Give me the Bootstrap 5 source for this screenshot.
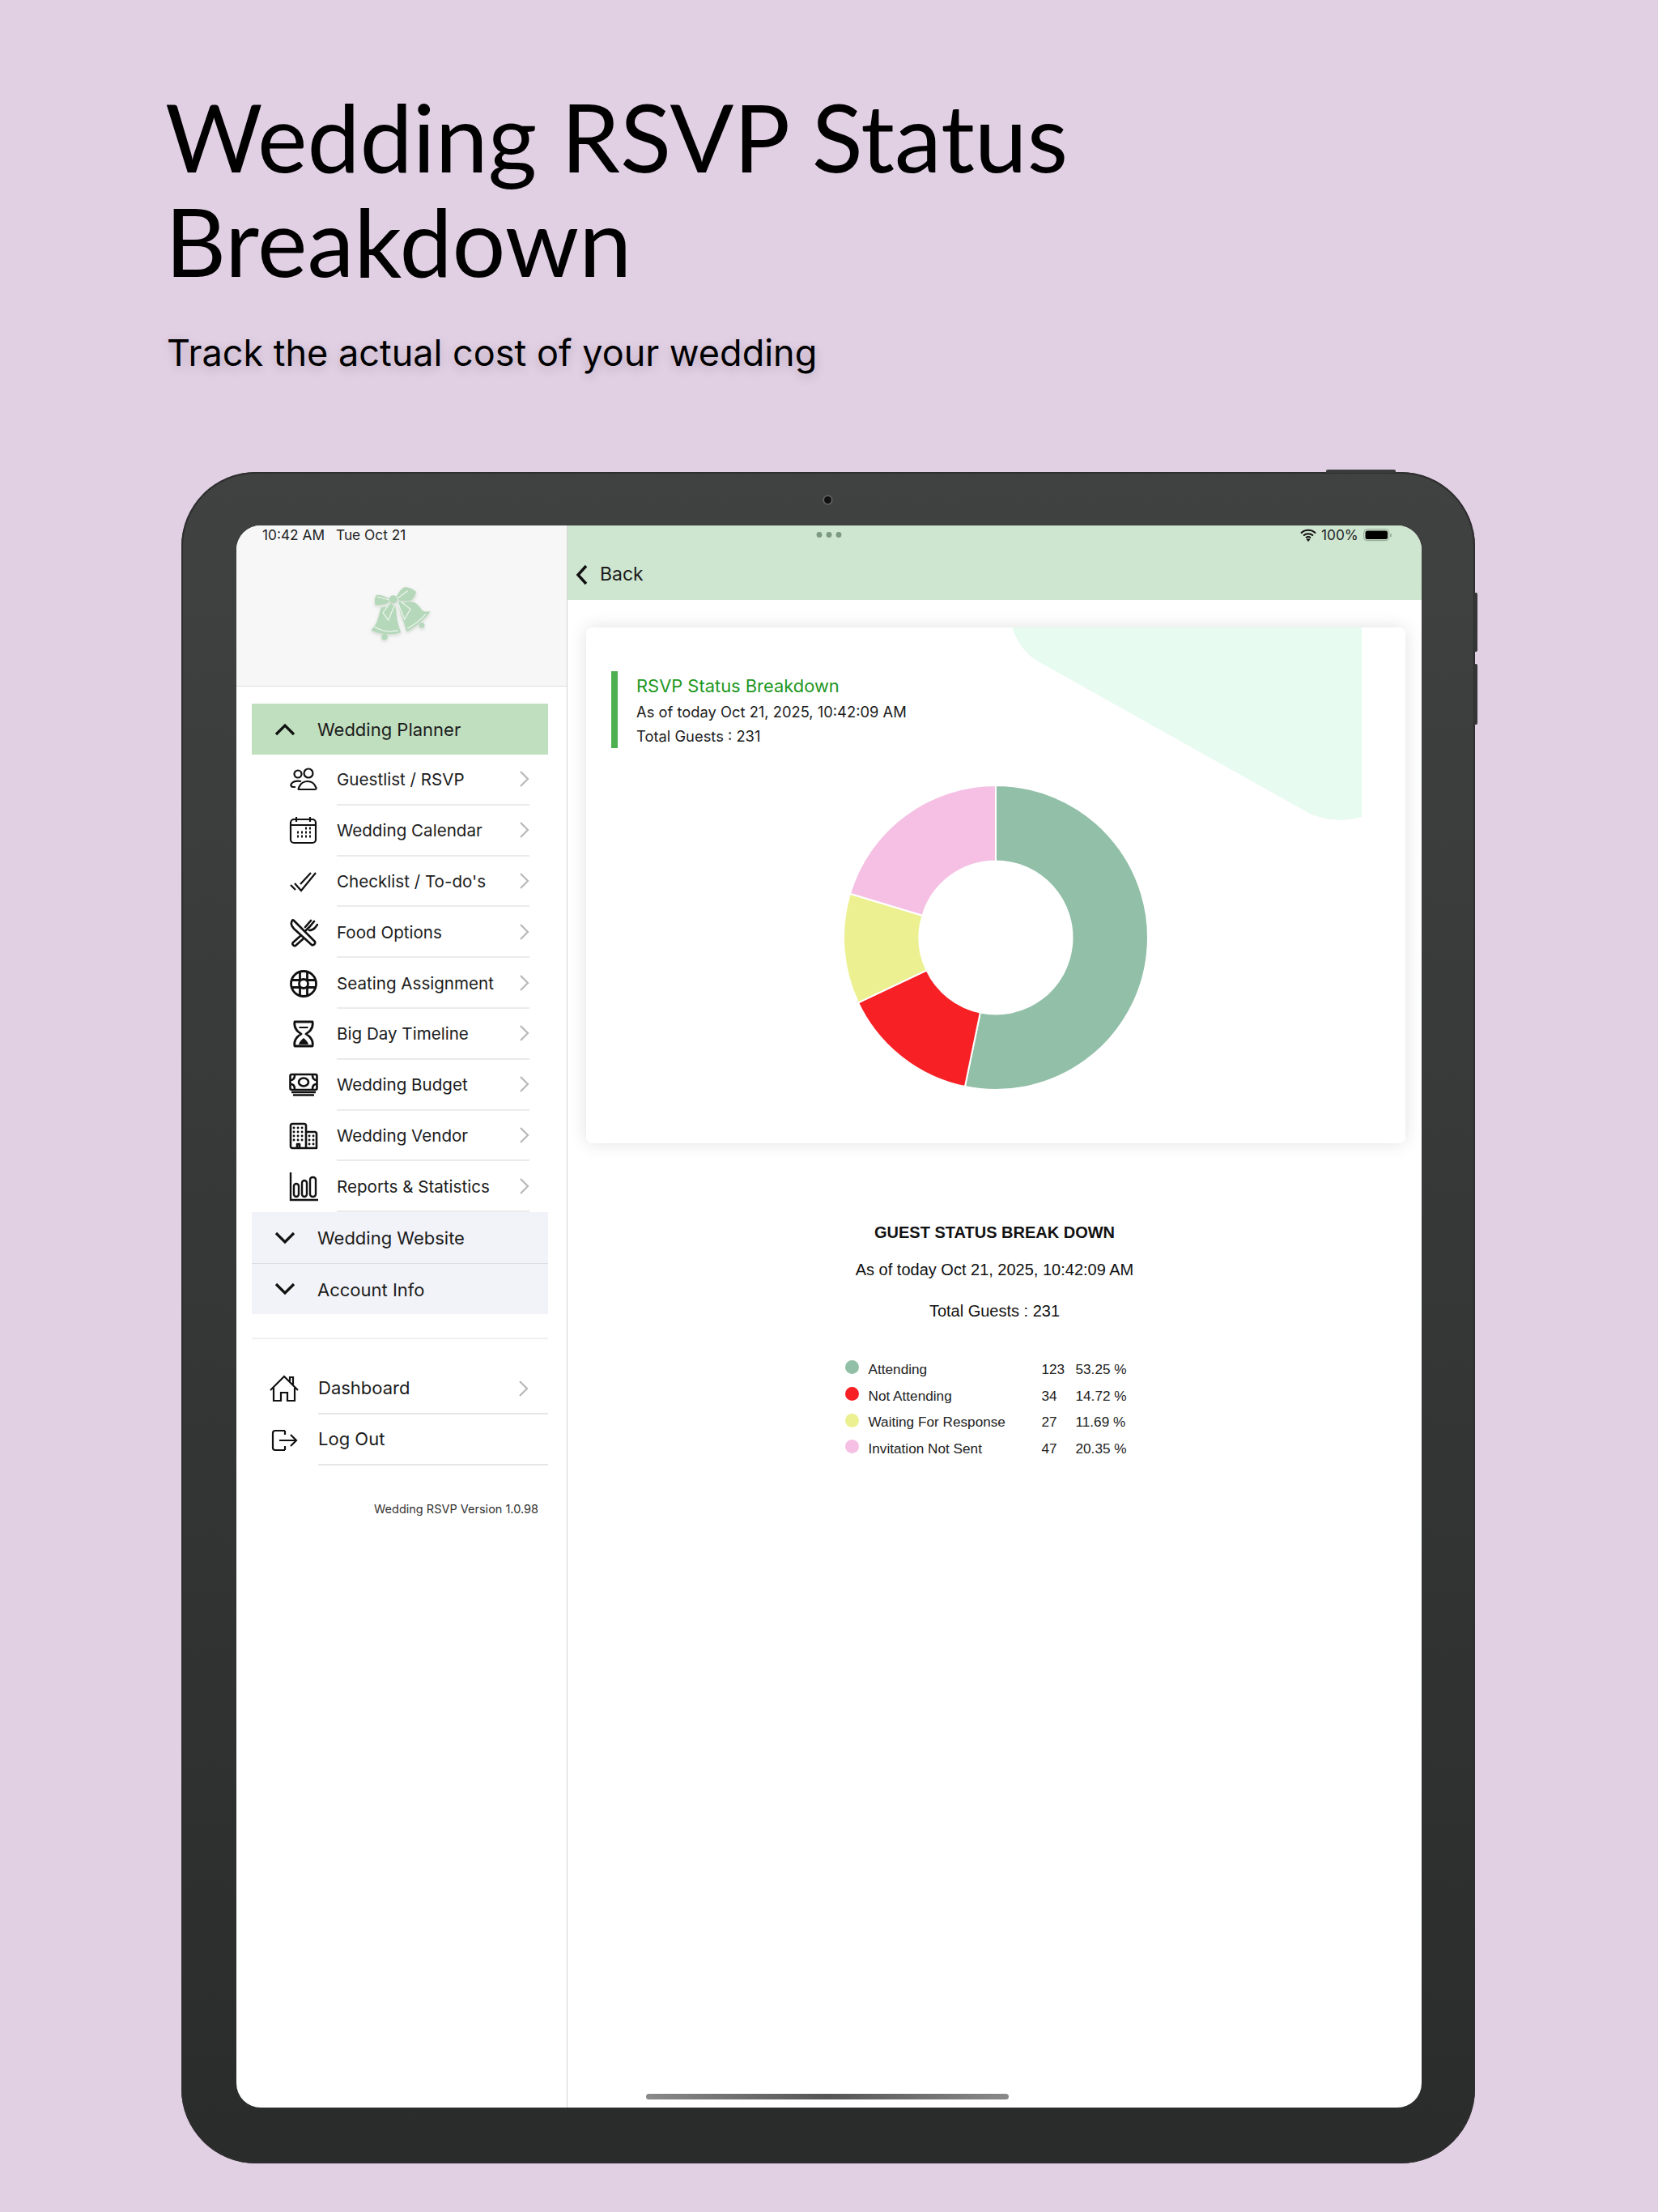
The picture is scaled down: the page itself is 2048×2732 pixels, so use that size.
<!DOCTYPE html>
<html lang="en">
  <head>
    <meta charset="UTF-8" />
    <meta name="viewport" content="width=device-width, initial-scale=1.0" />
    <link href="https://cdn.jsdelivr.net/npm/bootstrap@5.3.0/dist/css/bootstrap.min.css" rel="stylesheet" />
    <title>Wedding RSVP Status Breakdown</title>
    <style>
      body {
        background: #e1cfe4;
        height: 2732px;
        overflow: hidden;
        font-family: Inter, "Liberation Sans", sans-serif;
        color: #1c1c1c;
      }
      .promo-head {
        padding: 104px 0 0 204px;
        height: 583px;
      }
      .promo-title {
        font-family: Lato, sans-serif;
        font-weight: 400;
        font-size: 116.4px;
        line-height: 129px;
        color: #000;
        margin: 0;
        width: 1300px;
      }
      .promo-sub {
        font-size: 45px;
        line-height: 60px;
        margin: 44px 0 0 2px;
        color: #000;
        text-shadow: 0 4px 14px rgba(0, 0, 0, 0.18);
      }
      .tablet {
        position: relative;
        width: 1598px;
        height: 2089px;
        margin-left: 224px;
        padding: 66px 66px 69px 68px;
        border-radius: 92px;
        background: linear-gradient(#404141, #2a2b2b);
        box-shadow: inset 0 0 0 2px #2e2e2e;
      }
      .hw-top {
        position: absolute;
        left: 1414px;
        top: -3px;
        width: 86px;
        height: 4px;
        background: #3a3b3b;
        border-radius: 2px 2px 0 0;
      }
      .hw-side {
        position: absolute;
        right: -3px;
        width: 4px;
        background: #353636;
        border-radius: 0 2px 2px 0;
      }
      .hw-vol-a { top: 149px; height: 73px; }
      .hw-vol-b { top: 237px; height: 75px; }
      .cam {
        position: absolute;
        left: 794px;
        top: 30px;
        width: 9px;
        height: 9px;
        border-radius: 50%;
        background: #111;
        box-shadow: 0 0 0 1.5px #666;
      }
      .screen {
        position: relative;
        height: 100%;
        background: #fff;
        border-radius: 30px;
        overflow: hidden;
      }
      .status-left, .status-right, .status-dots {
        position: absolute;
        top: 3px;
        height: 18px;
        font-size: 17.3px;
        line-height: 18px;
        color: #222;
      }
      .status-left { left: 32px; }
      .status-left span + span { margin-left: 14px; }
      .status-dots { left: 716px; top: 8px; width: 32px; height: 7px; }
      .status-right { left: 1314px; gap: 6px; }
      .side-pane {
        width: 409px;
        flex: none;
        border-right: 1px solid #d4d4d4;
      }
      .side-top {
        height: 199px;
        padding: 19px 2px 0 0;
        background: #f7f7f7;
        border-bottom: 1px solid #dedede;
      }
      .side-logo { filter: drop-shadow(0 2px 2px rgba(120, 150, 120, 0.3)); }
      .side-nav {
        margin: 21px 23px 0 19px;
      }
      .group-row {
        height: 63px;
        font-size: 22px;
        background: #f2f3f8;
        padding-left: 28px;
      }
      .group-row + .group-row { border-top: 1px solid #dcdde2; }
      .group-row span { padding-top: 2px; }
      .group-open { background: #c0dfbf; }
      .group-row svg { width: 26px; height: 16px; margin-right: 27px; }
      .sub-row {
        height: 62.8px;
        font-size: 20.6px;
        padding-left: 46px;
      }
      .sub-ico { width: 36px; height: 36px; flex: none; margin-right: 23px; }
      .sub-body {
        height: 100%;
        border-bottom: 2px solid #ebebeb;
        margin-right: 23px;
      }
      .sub-body span { padding-top: 3px; }
      .go { width: 13px; height: 22px; flex: none; }
      .side-rule {
        border-top: 2px solid #f0f0f0;
        margin-top: 29px;
        height: 32px;
      }
      .foot-row {
        height: 63px;
        font-size: 22px;
        padding-left: 22px;
      }
      .foot-ico { width: 36px; height: 36px; flex: none; margin-right: 24px; }
      .foot-body {
        height: 100%;
        border-bottom: 2px solid #e6e6e6;
        padding-right: 24px;
      }
      .side-ver {
        font-size: 14.5px;
        text-align: right;
        padding-right: 12px;
        margin-top: 43px;
        color: #333;
      }
      .top-bar {
        height: 92px;
        background: #cee5cf;
        padding: 29px 0 0 10px;
        font-size: 23px;
        color: #1a1a1a;
      }
      .top-bar svg { width: 15px; height: 26px; margin-right: 15px; }
      .report-card {
        position: relative;
        height: 637px;
        border-radius: 8px;
        overflow: hidden;
      }
      .report-wrap {
        border-radius: 8px;
        box-shadow: 0 0 22px rgba(0, 0, 0, 0.12);
        margin: 34px 20px 0 23px;
      }
      .card-blob {
        position: absolute;
        left: 526px;
        top: 0;
        width: 432px;
        height: 240px;
      }
      .card-note {
        position: relative;
        margin: 54px 0 0 31px;
        height: 95px;
        border-left: 8px solid #4caf50;
        padding: 1.5px 0 0 23px;
        font-size: 18.35px;
        line-height: 30px;
      }
      .card-note-title {
        font-size: 21.9px;
        color: #1f971f;
        line-height: 33px;
      }
      .donut-box {
        position: relative;
        width: 376px;
        height: 376px;
        margin: 46px auto 0;
      }
      .stat-block {
        font-family: "Liberation Sans", Arial, sans-serif;
        text-align: center;
        margin-top: 96.5px;
        color: #111;
      }
      .stat-title { font-weight: 700; font-size: 20px; line-height: 26px; }
      .stat-line { font-size: 20px; line-height: 26px; margin-top: 20px; }
      .stat-line + .stat-line { margin-top: 25px; }
      .stat-legend {
        width: 370px;
        margin: 44px auto 0;
        display: grid;
        grid-template-columns: 29px 214px 42px auto;
        grid-auto-rows: 32.7px;
        align-items: center;
        text-align: left;
        font-size: 17.2px;
        color: #222;
      }
      .stat-dot {
        width: 17px;
        height: 17px;
        border-radius: 50%;
        margin-top: -6px;
      }
      .home-bar {
        position: absolute;
        left: 506px;
        bottom: 10px;
        width: 448px;
        height: 7px;
        border-radius: 4px;
        background: linear-gradient(90deg, #8a8a8a, #555 50%, #8a8a8a);
      }
    </style>
  </head>
  <body>
    <svg width="0" height="0" class="position-absolute">
      <symbol id="go" viewBox="0 0 13 22"><path d="M2 2l9 9-9 9" fill="none" stroke="#b8b8b8" stroke-width="2.2" /></symbol>
      <symbol id="up" viewBox="0 0 26 16"><path d="M2 14L13 3l11 11" fill="none" stroke="#111" stroke-width="3.2" /></symbol>
      <symbol id="down" viewBox="0 0 26 16"><path d="M2 2l11 11L24 2" fill="none" stroke="#111" stroke-width="3.2" /></symbol>
    </svg>

    <header class="promo-head">
      <h1 class="promo-title">Wedding RSVP Status Breakdown</h1>
      <p class="promo-sub">Track the actual cost of your wedding</p>
    </header>

    <div class="tablet">
      <div class="hw-top"></div>
      <div class="hw-side hw-vol-a"></div>
      <div class="hw-side hw-vol-b"></div>
      <div class="cam"></div>

      <div class="screen d-flex">
        <!-- Sidebar -->
        <aside class="side-pane">
          <div class="side-top d-flex align-items-center justify-content-center">
            <svg class="side-logo" width="100" height="85" viewBox="0 0 300 255">
              <g fill="#b6d8ba">
                <path d="M78 105c-6 15-8 32-14 48-5 14-14 27-24 37 15 8 40 15 65 15 16 0 32-2 46-6-6-16-12-34-15-52-2-14-2-30-6-46z" />
                <circle cx="90" cy="215" r="11" />
                <path d="M145 95c15-10 38-15 55-8 14 6 22 20 30 30 8 6 20 5 30 3-15 22-50 55-88 76-5-18-10-38-18-56-5-15-10-30-9-45z" />
                <circle cx="228" cy="172" r="10" />
                <path d="M108 74C90 64 72 58 60 60c-7 8-8 24-4 36 14 2 32-1 46-6zM135 66c6-14 16-30 30-36 16 2 34 8 42 18-2 12-8 22-16 30-14 4-32 4-46 2z" />
                <circle cx="122" cy="76" r="15" />
                <path d="M110 88L84 125l20 28 22-53zM140 88l24 62 22-38-34-30z" />
              </g>
              <g fill="none" stroke="#edf6ee" stroke-width="3.500">
                <path d="M52 176c15 10 30 16 48 18 13 1 26 0 40-3M175 184c25-14 50-34 68-54" />
                <path d="M110 90L84 125l20 28 22-53M140 90l24 60 22-38-36-28M108 78L62 66M138 72l38-28" />
              </g>
            </svg>
          </div>

          <div class="side-nav">
            <div class="group-row group-open d-flex align-items-center">
              <svg><use href="#up" /></svg>
              <span>Wedding Planner</span>
            </div>

            <div class="sub-row d-flex align-items-center">
              <svg class="sub-ico" viewBox="0 0 36 36" fill="none" stroke="#111" stroke-width="2.2">
                <circle cx="11" cy="11" r="4.5" /><circle cx="24" cy="10" r="5.5" />
                <path d="M8 27H5c-3 0-3-3-2-4 2-3 6-4 12-3M12 30h20c2 0 2-2 1-3-2-5-6-7-10-7s-8 2-10 6c-1 2-2 4-1 4z" />
              </svg>
              <div class="sub-body flex-grow-1 d-flex align-items-center justify-content-between">
                <span>Guestlist / RSVP</span><svg class="go"><use href="#go" /></svg>
              </div>
            </div>
            <div class="sub-row d-flex align-items-center">
              <svg class="sub-ico" viewBox="0 0 36 36" fill="none" stroke="#111" stroke-width="2.2">
                <rect x="2" y="4" width="31" height="29" rx="4" /><path d="M2 11h31M9 1v6M26 1v6" />
                <path d="M20 15h2M25 15h2M10 20h2M15 20h2M20 20h2M25 20h2M10 25h2M15 25h2M20 25h2M25 25h2" stroke-width="2.8" />
              </svg>
              <div class="sub-body flex-grow-1 d-flex align-items-center justify-content-between">
                <span>Wedding Calendar</span><svg class="go"><use href="#go" /></svg>
              </div>
            </div>
            <div class="sub-row d-flex align-items-center">
              <svg class="sub-ico" viewBox="0 0 36 36" fill="none" stroke="#111" stroke-width="2.2">
                <path d="M2 22l6 6M7 20l8 9L33 7M14 21L27 7" />
              </svg>
              <div class="sub-body flex-grow-1 d-flex align-items-center justify-content-between">
                <span>Checklist / To-do's</span><svg class="go"><use href="#go" /></svg>
              </div>
            </div>
            <div class="sub-row d-flex align-items-center">
              <svg class="sub-ico" viewBox="0 0 36 36" fill="none" stroke="#111" stroke-width="2.6" stroke-linejoin="round" stroke-linecap="round">
                <path d="M4 3c-2 3-1 7 2 10l22 20c2 1 5-1 4-4L6 3c-1-1-2-1-2 0z" />
                <path d="M14 22l-9 8c-2 2 1 5 3 4l9-8M21 15l5-5M20 11l7-8M25 15c3 0 5-1 7-3l3-4M26 10l5-6" />
              </svg>
              <div class="sub-body flex-grow-1 d-flex align-items-center justify-content-between">
                <span>Food Options</span><svg class="go"><use href="#go" /></svg>
              </div>
            </div>
            <div class="sub-row d-flex align-items-center">
              <svg class="sub-ico" viewBox="0 0 36 36" fill="none" stroke="#111" stroke-width="2.8">
                <circle cx="18" cy="18" r="15.5" /><circle cx="18" cy="18" r="5.5" />
                <path d="M13.500 3v10M22.500 3v10M13.500 23v10M22.500 23v10M3 13.500h10M3 22.500h10M23 13.500h10M23 22.500h10" />
              </svg>
              <div class="sub-body flex-grow-1 d-flex align-items-center justify-content-between">
                <span>Seating Assignment</span><svg class="go"><use href="#go" /></svg>
              </div>
            </div>
            <div class="sub-row d-flex align-items-center">
              <svg class="sub-ico" viewBox="0 0 36 36" fill="none" stroke="#111" stroke-width="2.8" stroke-linejoin="round">
                <path d="M7 3h22c1 5-1 9-4 12l-4 3 4 3c3 3 5 7 4 12H7c-1-5 1-9 4-12l4-3-4-3C8 12 6 8 7 3z" />
                <path d="M12 31c1-4 4-6 6-8 2 2 5 4 6 8zM12 9h12l-1 2H13z" fill="#111" stroke="none" />
              </svg>
              <div class="sub-body flex-grow-1 d-flex align-items-center justify-content-between">
                <span>Big Day Timeline</span><svg class="go"><use href="#go" /></svg>
              </div>
            </div>
            <div class="sub-row d-flex align-items-center">
              <svg class="sub-ico" viewBox="0 0 36 36" fill="none" stroke="#111" stroke-width="2.6">
                <rect x="1.500" y="5" width="33" height="19" rx="2" /><ellipse cx="18" cy="14.5" rx="6" ry="5" />
                <path d="M2 12c3 0 5-2 5-6M2 17c3 0 5 2 5 6M34 12c-3 0-5-2-5-6M34 17c-3 0-5 2-5 6M3 27h30M5 30.500h26" />
              </svg>
              <div class="sub-body flex-grow-1 d-flex align-items-center justify-content-between">
                <span>Wedding Budget</span><svg class="go"><use href="#go" /></svg>
              </div>
            </div>
            <div class="sub-row d-flex align-items-center">
              <svg class="sub-ico" viewBox="0 0 36 36" fill="none" stroke="#111" stroke-width="2.6" stroke-linejoin="round">
                <path d="M2 5c0-1 1-2 2-2h15c1 0 2 1 2 2v28H4c-1 0-2-1-2-2zM21 13h11c1 0 2 1 2 2v18H21zM10 33v-5h3v5" />
                <path d="M6 8h.1M11 8h.1M16 8h.1M6 13h.1M11 13h.1M16 13h.1M6 18h.1M11 18h.1M16 18h.1M6 23h.1M11 23h.1M16 23h.1M25 18h.1M30 18h.1M25 23h.1M30 23h.1M25 28h.1M30 28h.1" stroke-width="2.8" stroke-linecap="round" />
              </svg>
              <div class="sub-body flex-grow-1 d-flex align-items-center justify-content-between">
                <span>Wedding Vendor</span><svg class="go"><use href="#go" /></svg>
              </div>
            </div>
            <div class="sub-row d-flex align-items-center">
              <svg class="sub-ico" viewBox="0 0 36 36" fill="none" stroke="#111" stroke-width="2.4">
                <path d="M2 0v34h34" /><rect x="6" y="14" width="6" height="16" rx="3" /><rect x="16" y="10" width="6" height="20" rx="3" /><rect x="26" y="6" width="7" height="24" rx="3" />
              </svg>
              <div class="sub-body flex-grow-1 d-flex align-items-center justify-content-between">
                <span>Reports &amp; Statistics</span><svg class="go"><use href="#go" /></svg>
              </div>
            </div>

            <div class="group-row d-flex align-items-center">
              <svg><use href="#down" /></svg>
              <span>Wedding Website</span>
            </div>
            <div class="group-row d-flex align-items-center">
              <svg><use href="#down" /></svg>
              <span>Account Info</span>
            </div>

            <div class="side-rule"></div>

            <div class="foot-row d-flex align-items-center">
              <svg class="foot-ico" viewBox="0 0 36 36" fill="none" stroke="#111" stroke-width="2.2">
                <path d="M1 19L18 2l17 17M5 16v16h9V22h8v10h9V16M25 8V3h4v9" />
              </svg>
              <div class="foot-body flex-grow-1 d-flex align-items-center justify-content-between">
                <span>Dashboard</span><svg class="go"><use href="#go" /></svg>
              </div>
            </div>
            <div class="foot-row d-flex align-items-center">
              <svg class="foot-ico" viewBox="0 0 36 36" fill="none" stroke="#111" stroke-width="2.2">
                <path d="M19 6H7c-2 0-3 1-3 3v18c0 2 1 3 3 3h12M12 18h21M26 11l7 7-7 7M19 6v5M19 25v5" />
              </svg>
              <div class="foot-body flex-grow-1 d-flex align-items-center">
                <span>Log Out</span>
              </div>
            </div>

            <div class="side-ver">Wedding RSVP Version 1.0.98</div>
          </div>
        </aside>

        <!-- Main pane -->
        <main class="flex-grow-1">
          <div class="top-bar d-flex align-items-center">
            <svg viewBox="0 0 15 26"><path d="M13 2L3 13l10 11" fill="none" stroke="#111" stroke-width="3.4" /></svg>
            <span>Back</span>
          </div>

          <div class="report-wrap">
            <div class="report-card card border-0">
              <svg class="card-blob" viewBox="0 0 432 240">
                <path d="M0 0c8 22 20 36 36 44l332 186c24 10 46 9 64 4V0z" fill="#e7fbf0" />
              </svg>
              <div class="card-note">
                <div class="card-note-title">RSVP Status Breakdown</div>
                <div>As of today Oct 21, 2025, 10:42:09 AM</div>
                <div>Total Guests : 231</div>
              </div>
              <div class="donut-box">
                <svg id="donut" width="376" height="376" viewBox="-188 -188 376 376"></svg>
              </div>
            </div>
          </div>

          <section class="stat-block">
            <div class="stat-title">GUEST STATUS BREAK DOWN</div>
            <div class="stat-line">As of today Oct 21, 2025, 10:42:09 AM</div>
            <div class="stat-line">Total Guests : 231</div>
            <div class="stat-legend" id="legend"></div>
          </section>
        </main>

        <!-- Status bar, over the panes -->
        <div class="status-left"><span>10:42 AM</span><span>Tue Oct 21</span></div>
        <svg class="status-dots" viewBox="0 0 32 7">
          <g fill="#7b9a80"><circle cx="4" cy="3.5" r="3.4" /><circle cx="16" cy="3.5" r="3.4" /><circle cx="28" cy="3.5" r="3.4" /></g>
        </svg>
        <div class="status-right d-flex align-items-center">
          <svg width="20" height="16" viewBox="0 0 20 16">
            <path d="M1 5.5c5-5 13-5 18 0M4 8.5c3.500-3 8.500-3 12 0M7 11.200c2-1.500 4-1.500 6 0" fill="none" stroke="#111" stroke-width="2" />
            <path d="M10 16l-2.500-3c1.500-1 3.500-1 5 0z" fill="#111" />
          </svg>
          <span>100%</span>
          <svg width="36" height="16" viewBox="0 0 36 16">
            <rect x="0.700" y="0.700" width="31" height="14" rx="4" fill="none" stroke="#8fa592" />
            <rect x="2.500" y="2.500" width="27.500" height="10.500" rx="2.500" fill="#000" />
            <path d="M34 6v4" stroke="#8fa592" stroke-width="1.500" />
          </svg>
        </div>
        <div class="home-bar"></div>
      </div>
    </div>

    <script src="https://cdn.jsdelivr.net/npm/bootstrap@5.3.0/dist/js/bootstrap.bundle.min.js"></script>
    <script>
      document.addEventListener("DOMContentLoaded", function () {
        const rows = [
          { name: "Attending", count: 123, pct: "53.25 %", color: "#91bfa7" },
          { name: "Not Attending", count: 34, pct: "14.72 %", color: "#f72025" },
          { name: "Waiting For Response", count: 27, pct: "11.69 %", color: "#ecf090" },
          { name: "Invitation Not Sent", count: 47, pct: "20.35 %", color: "#f5c0e3" },
        ];
        const total = 231;
        const outer = 188;
        const inner = 94.5;
        const point = (r, a) => `${(r * Math.sin(a)).toFixed(2)} ${(-r * Math.cos(a)).toFixed(2)}`;

        // donut slices, clockwise from 12 o'clock
        let start = 0;
        let slices = "";
        rows.forEach((row) => {
          const end = start + (row.count / total) * Math.PI * 2;
          const large = end - start > Math.PI ? 1 : 0;
          slices += `<path d="M${point(outer, start)}A${outer} ${outer} 0 ${large} 1 ${point(outer, end)}L${point(inner, end)}A${inner} ${inner} 0 ${large} 0 ${point(inner, start)}Z" fill="${row.color}" stroke="#fff" stroke-width="2" />`;
          start = end;
        });
        document.getElementById("donut").innerHTML = slices;

        // legend
        document.getElementById("legend").innerHTML = rows
          .map((row) => `<div class="stat-dot" style="background:${row.color}"></div><div>${row.name}</div><div>${row.count}</div><div>${row.pct}</div>`)
          .join("");
      });
    </script>
  </body>
</html>
